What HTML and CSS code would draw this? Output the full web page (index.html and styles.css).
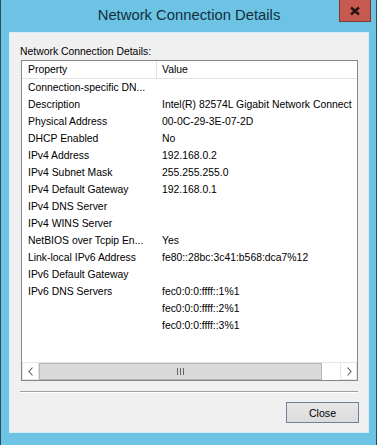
FILE: index.html
```html
<!DOCTYPE html>
<html lang="en">

<head>
    <meta charset="UTF-8">
    <title>Network Connection Details</title>
    <link rel="stylesheet" href="styles.css">
</head>

<body>
    <div class="window">
        <!-- Title bar -->
        <div class="titlebar">
            <span></span>
            <span class="title">Network Connection Details</span>
            <button class="close-x" aria-label="Close">
                <svg width="12" height="10" viewBox="0 0 12 10">
                    <path d="M2 1.5 L10 8.5 M10 1.5 L2 8.5" stroke="#2a1414" stroke-width="2.4" fill="none" />
                </svg>
            </button>
        </div>

        <!-- Client area -->
        <div class="client">
            <div class="label">Network Connection Details:</div>

            <div class="listview">
                <div class="lv-head">
                    <div class="col-prop">Property</div>
                    <div class="col-val">Value</div>
                </div>

                <div class="lv-body">
                    <div class="lv-row"><div class="col-prop">Connection-specific DN...</div><div class="col-val"></div></div>
                    <div class="lv-row"><div class="col-prop">Description</div><div class="col-val">Intel(R) 82574L Gigabit Network Connect</div></div>
                    <div class="lv-row"><div class="col-prop">Physical Address</div><div class="col-val">00-0C-29-3E-07-2D</div></div>
                    <div class="lv-row"><div class="col-prop">DHCP Enabled</div><div class="col-val">No</div></div>
                    <div class="lv-row"><div class="col-prop">IPv4 Address</div><div class="col-val">192.168.0.2</div></div>
                    <div class="lv-row"><div class="col-prop">IPv4 Subnet Mask</div><div class="col-val">255.255.255.0</div></div>
                    <div class="lv-row"><div class="col-prop">IPv4 Default Gateway</div><div class="col-val">192.168.0.1</div></div>
                    <div class="lv-row"><div class="col-prop">IPv4 DNS Server</div><div class="col-val"></div></div>
                    <div class="lv-row"><div class="col-prop">IPv4 WINS Server</div><div class="col-val"></div></div>
                    <div class="lv-row"><div class="col-prop">NetBIOS over Tcpip En...</div><div class="col-val">Yes</div></div>
                    <div class="lv-row"><div class="col-prop">Link-local IPv6 Address</div><div class="col-val">fe80::28bc:3c41:b568:dca7%12</div></div>
                    <div class="lv-row"><div class="col-prop">IPv6 Default Gateway</div><div class="col-val"></div></div>
                    <div class="lv-row"><div class="col-prop">IPv6 DNS Servers</div><div class="col-val">fec0:0:0:ffff::1%1</div></div>
                    <div class="lv-row"><div class="col-prop"></div><div class="col-val">fec0:0:0:ffff::2%1</div></div>
                    <div class="lv-row"><div class="col-prop"></div><div class="col-val">fec0:0:0:ffff::3%1</div></div>
                </div>

                <!-- Horizontal scrollbar -->
                <div class="hscroll">
                    <div class="sb-arrow">
                        <svg width="6" height="9" viewBox="0 0 6 9">
                            <polyline points="4.5,0.5 1,4.5 4.5,8.5" stroke="#606060" stroke-width="1.1" fill="none" />
                        </svg>
                    </div>
                    <div class="sb-track">
                        <div class="sb-thumb">
                            <span class="grip"></span><span class="grip"></span><span class="grip"></span>
                        </div>
                    </div>
                    <div class="sb-arrow">
                        <svg width="6" height="9" viewBox="0 0 6 9">
                            <polyline points="1.5,0.5 5,4.5 1.5,8.5" stroke="#606060" stroke-width="1.1" fill="none" />
                        </svg>
                    </div>
                </div>
            </div>

            <div class="separator"></div>

            <div class="buttons">
                <button class="btn">Close</button>
            </div>
        </div>
    </div>
</body>

</html>
```

FILE: styles.css
```css
body {
    margin: 0;
    width: 379px;
    height: 445px;
    overflow: hidden;
    background-color: #ffffff;
    font-family: 'Liberation Sans', Arial, sans-serif;
    color: #000;
}

.window {
    width: 360px;
    height: 445px;
    padding: 0 7px 0 8px;
    background-color: #6cc3e3;
    border-left: 1px solid #2c4b5c;
    border-right: 1px solid #2c4b5c;
}

.titlebar {
    height: 32px;
    display: grid;
    grid-template-columns: 1fr auto 1fr;
}

.title {
    font-size: 14.8px;
    line-height: 30px;
    color: #13303d;
}

.close-x {
    justify-self: end;
    align-self: start;
    width: 32px;
    height: 22px;
    margin-right: -2px;
    padding: 0;
    border: 1px solid #7c3a34;
    border-top: none;
    background-color: #c75a50;
    display: flex;
    align-items: center;
    justify-content: center;
}

.client {
    height: 401px;
    box-sizing: border-box;
    padding: 12px 11px 0 11px;
    background-color: #f0f0f0;
    box-shadow: inset 0 0 0 1px #d6eef8;
    font-size: 10.4px;
}

.label {
    height: 15px;
    line-height: 15px;
    margin-bottom: 1px;
}

.listview {
    height: 321px;
    box-sizing: border-box;
    margin-left: 1px;
    border: 1px solid #82878f;
    background-color: #ffffff;
    display: flex;
    flex-direction: column;
}

.lv-head,
.lv-row {
    display: flex;
    height: 17px;
    line-height: 17px;
    white-space: nowrap;
}

.lv-head {
    border-bottom: 1px solid #e2e2e2;
}

.lv-head .col-prop {
    border-right: 1px solid #e2e2e2;
}

.col-prop {
    width: 128px;
    padding-left: 6px;
    overflow: hidden;
    flex-shrink: 0;
}

.col-val {
    flex: 1;
    padding-left: 5px;
    overflow: hidden;
}

.lv-row .col-prop {
    width: 129px;
}

.lv-body {
    flex: 1;
}

.hscroll {
    height: 17px;
    display: flex;
    border-top: 1px solid #e6e6e6;
    background-color: #ffffff;
}

.sb-arrow {
    width: 17px;
    display: flex;
    align-items: center;
    justify-content: center;
    box-sizing: border-box;
    border: 1px solid #e6e6e6;
    border-top: none;
}

.sb-track {
    flex: 1;
    display: flex;
}

.sb-thumb {
    width: 283px;
    box-sizing: border-box;
    border: 1px solid #b5b5b5;
    background-color: #dadada;
    display: flex;
    align-items: center;
    justify-content: center;
    gap: 2px;
}

.grip {
    width: 1px;
    height: 7px;
    background-color: #606060;
}

.separator {
    margin-top: 10px;
    height: 1px;
    background-color: #a0a0a0;
    border-bottom: 1px solid #ffffff;
}

.buttons {
    display: flex;
    justify-content: flex-end;
    margin-top: 9px;
    margin-right: -1px;
}

.btn {
    width: 73px;
    height: 21px;
    padding: 0;
    font-family: 'Liberation Sans', Arial, sans-serif;
    font-size: 10.6px;
    color: #000;
    border: 1px solid #6f8196;
    background: linear-gradient(#e6e6e6, #dcdcdc);
}
```
